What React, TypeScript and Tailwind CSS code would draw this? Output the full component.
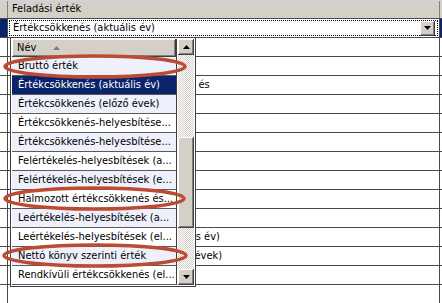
import React from 'react';

const font = { fontFamily: 'Tahoma, "DejaVu Sans Condensed", "DejaVu Sans", sans-serif' };

const mainRows: string[] = [
  '',
  'Értékcsökkenés (előző évek)',
  'Halmozott értékcsökkenés (előző év) és',
  'Értékcsökkenés-helyesbítések',
  'Értékcsökkenés-helyesbítések',
  'Felértékelés-helyesbítések',
  'Felértékelés-helyesbítések',
  'Halmozott értékcsökkenés',
  'Leértékelés-helyesbítések',
  'Leértékelés-helyesbítések',
  'Rendkívüli értékcsökkenések (aktuális év)',
  'Terven felüli értékcsökkenése (előző évek)',
  '',
  '',
];

const listItems: string[] = [
  'Bruttó érték',
  'Értékcsökkenés (aktuális év)',
  'Értékcsökkenés (előző évek)',
  'Értékcsökkenés-helyesbítése...',
  'Értékcsökkenés-helyesbítése...',
  'Felértékelés-helyesbítések (a...',
  'Felértékelés-helyesbítések (e...',
  'Halmozott értékcsökkenés és...',
  'Leértékelés-helyesbítések (a...',
  'Leértékelés-helyesbítések (el...',
  'Nettó könyv szerinti érték',
  'Rendkívüli értékcsökkenés (el...',
];

const bevel =
  'bg-[#d4d0c8] shadow-[inset_-1px_-1px_#404040,inset_1px_1px_#ffffff,inset_-2px_-2px_#808080,inset_2px_2px_#d4d0c8]';

const Arrow: React.FC<{ up?: boolean; color?: string }> = ({ up, color = '#000' }) => (
  <svg width="7" height="4" viewBox="0 0 7 4">
    {up ? <polygon points="0,4 7,4 3.5,0" fill={color} /> : <polygon points="0,0 7,0 3.5,4" fill={color} />}
  </svg>
);

const ScrollButton: React.FC<{ up?: boolean }> = ({ up }) => (
  <div className={`h-4 w-4 flex items-center justify-center ${bevel}`}>
    <Arrow up={up} />
  </div>
);

const TableRow: React.FC<{ text: string }> = ({ text }) => (
  <div className="flex h-[19px] border-b border-[#4a4a4a]">
    <div className="w-[8px] border-r border-[#4a4a4a]" />
    <div className="w-[432px] border-r border-[#4a4a4a] pl-[4px] leading-[18px] whitespace-nowrap overflow-hidden">
      {text}
    </div>
    <div className="flex-1" />
  </div>
);

const DropdownList: React.FC = () => (
  <div className="absolute left-[10px] top-[37px] w-[186px] border border-[#404040] bg-white p-px flex">
    <div className="w-[165px] border-r border-[#404040]">
      <div className={`h-[18px] flex items-center pl-[5px] ${bevel}`}>
        <span className="w-[36px]">Név</span>
        <Arrow up color="#808080" />
      </div>
      {listItems.map((item, i) => (
        <div
          key={i}
          className={`h-[19px] border-b border-[#5a5a5a] pl-[6px] leading-[18px] whitespace-nowrap overflow-hidden ${
            i === 1 ? 'bg-[#0a246a] text-white' : i % 2 === 0 ? 'bg-[#eef0fb]' : 'bg-white'
          }`}
        >
          {item}
        </div>
      ))}
    </div>
    <div className="w-4 ml-px flex flex-col bg-[repeating-conic-gradient(#d4d0c8_0_25%,#ffffff_0_50%)] [background-size:2px_2px]">
      <ScrollButton up />
      <div className="h-[82px]" />
      <div className={`h-[91px] ${bevel}`} />
      <div className="flex-1" />
      <ScrollButton />
    </div>
  </div>
);

// red marker ovals drawn over the list
const Annotations: React.FC = () => (
  <svg className="absolute left-0 top-0 pointer-events-none" width="442" height="303">
    <g fill="none" stroke="#bd4a33" strokeWidth="3.5">
      <ellipse cx="95" cy="66.5" rx="90" ry="10.5" />
      <ellipse cx="94.5" cy="198.5" rx="89.5" ry="10.5" />
      <ellipse cx="95" cy="255.5" rx="91" ry="10.5" />
    </g>
  </svg>
);

export default function App() {
  return (
    <div className="relative w-[442px] h-[303px] overflow-hidden bg-white text-[11px] text-black" style={font}>
      <div className="h-px bg-[#c9d6ea]" />
      <div className="flex h-[18px] bg-[#d4d0c8] border-b border-[#4a4a4a]">
        <div className="w-[8px] border-r border-[#808080]" />
        <div className="w-[432px] border-r border-[#808080] pl-[4px] leading-[16px]">Feladási érték</div>
        <div className="flex-1" />
      </div>
      <div className="flex h-[19px] border-b border-[#4a4a4a]">
        <div className="w-[8px] bg-[#0a246a] border-r border-[#4a4a4a]" />
        <div className="w-[432px] border-r border-[#4a4a4a] p-px">
          <div className="h-full border border-dotted border-black flex items-center justify-between pl-[3px] pr-[2px]">
            <span>Értékcsökkenés (aktuális év)</span>
            <div className={`h-[15px] w-[15px] flex items-center justify-center ${bevel}`}>
              <Arrow />
            </div>
          </div>
        </div>
        <div className="flex-1 bg-[#0a246a]" />
      </div>
      {mainRows.map((r, i) => (
        <TableRow key={i} text={r} />
      ))}
      <div className="flex h-[19px]">
        <div className="w-[8px] border-r border-[#4a4a4a]" />
        <div className="w-[432px] border-r border-[#4a4a4a] pl-[4px] leading-[18px] whitespace-nowrap">
          Rendkívüli értékcsökkenés (előző évek)
        </div>
      </div>
      <DropdownList />
      <Annotations />
    </div>
  );
}
